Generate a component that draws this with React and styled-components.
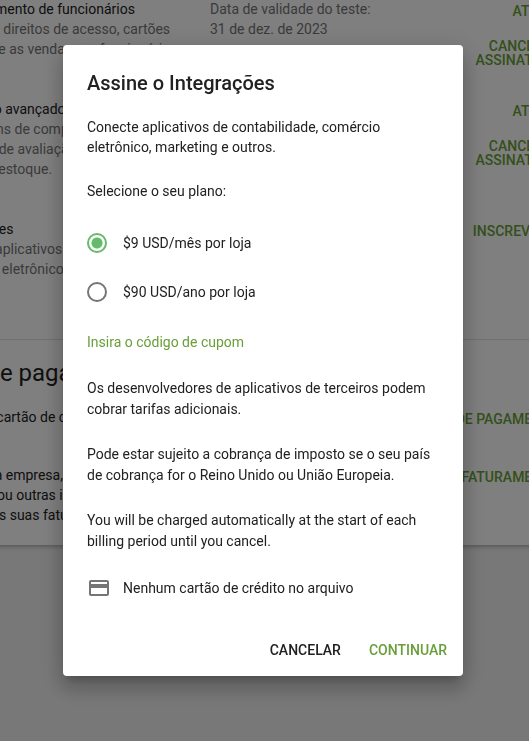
import React, { useState } from "react";
import styled, { createGlobalStyle } from "styled-components";
import { MdCreditCard } from "react-icons/md";

const GlobalStyle = createGlobalStyle`
  * {
    box-sizing: border-box;
  }

  body {
    margin: 0;
    background: #f0f0f0;
    color: #212121;
    font-family: Roboto, "Liberation Sans", sans-serif;
    font-size: 14px;
    line-height: 20px;
  }
`;

const Page = styled.main`
  min-height: 100vh;
  overflow: hidden;
`;

const Card = styled.div`
  margin: -21px -55px 0 -112px;
  background: #fff;
  box-shadow: 0 1px 5px rgba(0, 0, 0, 0.35);
`;

const Section = styled.section`
  padding: ${(props) => (props.$billing ? "19px 24px 2px" : "0 24px 40px")};
  border-top: ${(props) => (props.$billing ? "1px solid #e0e0e0" : "none")};
`;

const SectionTitle = styled.h2`
  margin: 0;
  font-size: 24px;
  font-weight: 400;
  line-height: 28px;
`;

const Row = styled.div`
  display: grid;
  grid-template-columns: 240px 1fr auto;
  column-gap: 30px;
  padding: ${(props) => (props.$billing ? "20px 0 18px 28px" : "20px 0 12px 28px")};
`;

const RowInfo = styled.div`
  padding-bottom: 8px;
`;

const RowName = styled.h3`
  margin: 0;
  font-size: 14px;
  font-weight: 400;
`;

const RowText = styled.p`
  margin: 0;
  color: ${(props) => (props.$dark ? "#212121" : "#757575")};
`;

const RowActions = styled.div`
  display: flex;
  flex-direction: column;
  align-items: flex-end;
  gap: 21px;
  padding-top: 5px;
`;

const RowAction = styled.button`
  padding: 0;
  border: none;
  background: none;
  color: #689f38;
  font: 500 14px/14px Roboto, "Liberation Sans", sans-serif;
  text-align: right;
  text-transform: uppercase;
  white-space: nowrap;
  cursor: pointer;
`;

const Backdrop = styled.div`
  position: fixed;
  inset: 0;
  display: flex;
  align-items: center;
  justify-content: center;
  padding: 0 3px 20px 0;
  background: rgba(0, 0, 0, 0.5);
`;

const Dialog = styled.form`
  width: 400px;
  max-width: 90%;
  border-radius: 4px;
  background: #fff;
  box-shadow: 0 7px 8px -4px rgba(0, 0, 0, 0.2),
    0 13px 19px 2px rgba(0, 0, 0, 0.14), 0 5px 24px 4px rgba(0, 0, 0, 0.12);
`;

const DialogBody = styled.div`
  padding: 26px 24px 0;
`;

const DialogTitle = styled.h1`
  margin: 0 0 22px;
  font-size: 20px;
  font-weight: 500;
  line-height: 24px;
`;

const Intro = styled.p`
  margin: 0 0 24px;
`;

const Plans = styled.fieldset`
  margin: 0;
  padding: 0;
  border: none;
`;

const PlansLegend = styled.legend`
  padding: 0;
`;

const PlanList = styled.div`
  display: flex;
  flex-direction: column;
  gap: 29px;
  padding: 32px 0 30px;
`;

const PlanLabel = styled.label`
  display: flex;
  align-items: center;
  gap: 16px;
  line-height: 20px;
  cursor: pointer;
`;

const PlanRadio = styled.input`
  appearance: none;
  width: 20px;
  height: 20px;
  margin: 0;
  border: 2px solid #757575;
  border-radius: 50%;

  &:checked {
    border-color: #66bb6a;
    background: radial-gradient(circle, #66bb6a 5px, transparent 6px);
  }
`;

const CouponLink = styled.a`
  display: block;
  margin-bottom: 26px;
  color: #689f38;
  text-decoration: none;
`;

const Note = styled.p`
  margin: 0 0 24px;
  line-height: 21px;
`;

const CardInfo = styled.div`
  display: flex;
  align-items: center;
  gap: 12px;

  svg {
    color: #757575;
  }
`;

const DialogActions = styled.div`
  display: flex;
  justify-content: flex-end;
  gap: 12px;
  padding: 32px 8px 8px;
`;

const DialogButton = styled.button`
  padding: 0 8px;
  border: none;
  background: none;
  color: ${(props) => (props.$primary ? "#689f38" : "#212121")};
  font: 500 14px/36px Roboto, "Liberation Sans", sans-serif;
  text-transform: uppercase;
  cursor: pointer;
`;

const plans = [
  { id: "month", label: "$9 USD/mês por loja" },
  { id: "year", label: "$90 USD/ano por loja" },
];

const CancelAction = () => (
  <RowAction type="button">
    Cancelar
    <br />
    assinatura
  </RowAction>
);

const Subscriptions = () => (
  <Section>
    <Row>
      <RowInfo>
        <RowName>Gerenciamento de funcionários</RowName>
        <RowText>
          Gerenciar direitos de acesso, cartões de ponto e as vendas por funcionário
        </RowText>
      </RowInfo>
      <RowText>
        Data de validade do teste:
        <br />
        31 de dez. de 2023
      </RowText>
      <RowActions>
        <RowAction type="button">Ativar</RowAction>
        <CancelAction />
      </RowActions>
    </Row>
    <Row>
      <RowInfo>
        <RowName>Inventário avançado</RowName>
        <RowText>
          Crie ordens de compra, veja os
          <br />
          métodos de avaliação e os
          <br />
          níveis de estoque.
        </RowText>
      </RowInfo>
      <div />
      <RowActions>
        <RowAction type="button">Ativar</RowAction>
        <CancelAction />
      </RowActions>
    </Row>
    <Row>
      <RowInfo>
        <RowName>Integrações</RowName>
        <RowText>
          Conecte aplicativos de marketing,
          <br />
          comércio eletrônico e outros.
        </RowText>
      </RowInfo>
      <div />
      <RowActions>
        <RowAction type="button">Inscreva-se</RowAction>
      </RowActions>
    </Row>
  </Section>
);

const Billing = () => (
  <Section $billing>
    <SectionTitle>Dados de pagamento</SectionTitle>
    <Row $billing>
      <RowText $dark>Nenhum cartão de crédito</RowText>
      <div />
      <RowActions>
        <RowAction type="button">Método de pagamento</RowAction>
      </RowActions>
    </Row>
    <Row $billing>
      <RowText $dark>
        Registre a empresa, endereço,
        <br />
        telefone, ou outras informações
        <br />
        para todas suas faturas
      </RowText>
      <div />
      <RowActions>
        <RowAction type="button">Dados de faturamento</RowAction>
      </RowActions>
    </Row>
  </Section>
);

const SubscribeDialog = () => {
  const [plan, setPlan] = useState("month");

  return (
    <Backdrop>
      <Dialog
        role="dialog"
        aria-labelledby="dialog-title"
        onSubmit={(e) => e.preventDefault()}
      >
        <DialogBody>
          <DialogTitle id="dialog-title">Assine o Integrações</DialogTitle>
          <Intro>
            Conecte aplicativos de contabilidade, comércio eletrônico, marketing e outros.
          </Intro>
          <Plans>
            <PlansLegend>Selecione o seu plano:</PlansLegend>
            <PlanList>
              {plans.map(({ id, label }) => (
                <PlanLabel key={id} htmlFor={id}>
                  <PlanRadio
                    type="radio"
                    name="plan"
                    id={id}
                    value={id}
                    checked={plan === id}
                    onChange={() => setPlan(id)}
                  />
                  {label}
                </PlanLabel>
              ))}
            </PlanList>
          </Plans>
          <CouponLink href="#coupon">Insira o código de cupom</CouponLink>
          <Note>
            Os desenvolvedores de aplicativos de terceiros podem cobrar tarifas adicionais.
          </Note>
          <Note>
            Pode estar sujeito a cobrança de imposto se o seu país de cobrança for o
            Reino Unido ou União Europeia.
          </Note>
          <Note>
            You will be charged automatically at the start of each billing period until
            you cancel.
          </Note>
          <CardInfo>
            <MdCreditCard size={24} />
            Nenhum cartão de crédito no arquivo
          </CardInfo>
        </DialogBody>
        <DialogActions>
          <DialogButton type="button">Cancelar</DialogButton>
          <DialogButton type="submit" $primary>
            Continuar
          </DialogButton>
        </DialogActions>
      </Dialog>
    </Backdrop>
  );
};

const App = () => (
  <>
    <GlobalStyle />
    <Page>
      <Card>
        <Subscriptions />
        <Billing />
      </Card>
    </Page>
    <SubscribeDialog />
  </>
);

export default App;
